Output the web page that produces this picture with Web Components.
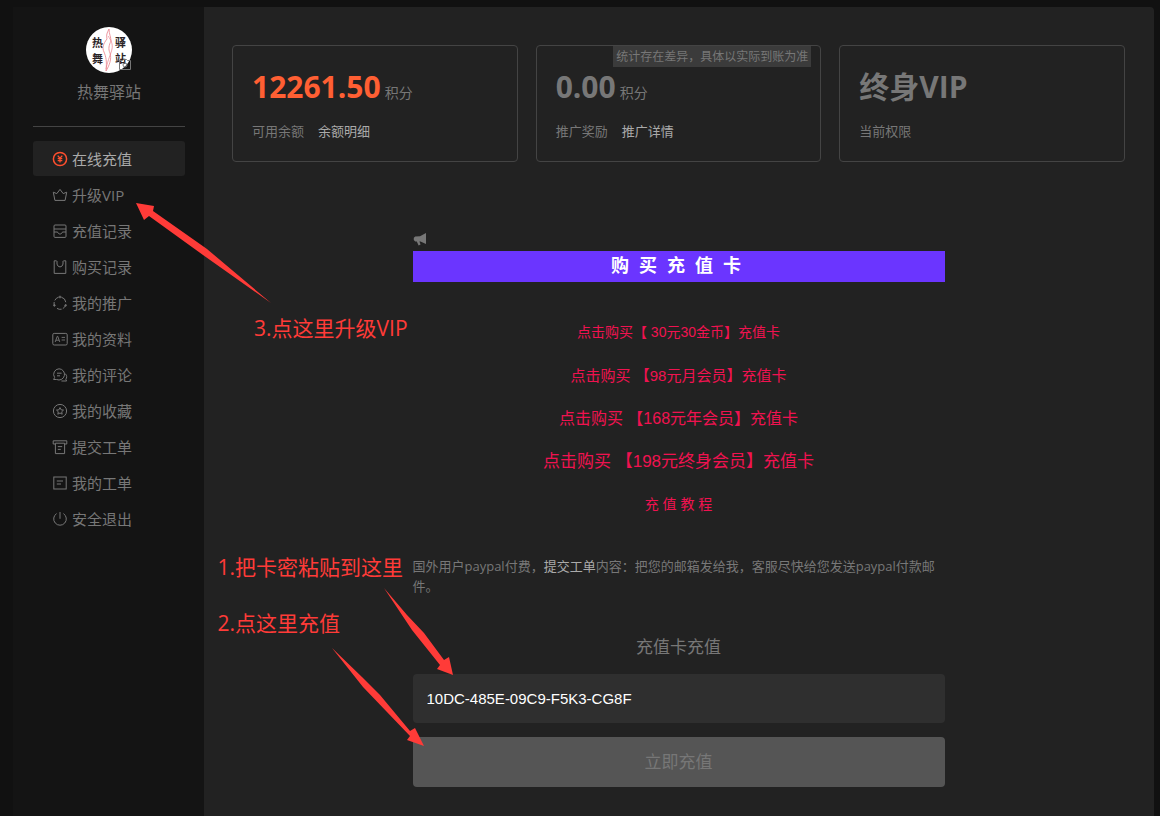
<!DOCTYPE html>
<html lang="zh-CN">
<head>
<meta charset="utf-8">
<title>在线充值</title>
<style>
  html { background: #111; }
  body {
    margin: 0;
    background: #111;
    color: #777;
    font-family: "Open Sans", "Noto Sans CJK SC", sans-serif;
    font-size: 13px;
  }
</style>
</head>
<body>
<member-page></member-page>

<script>
const define = (name, html) => {
  const template = document.createElement('template');
  template.innerHTML = html;
  customElements.define(name, class extends HTMLElement {
    constructor() {
      super();
      this.attachShadow({ mode: 'open' }).append(template.content.cloneNode(true));
    }
  });
};

const ICONS = {
  coin: '<circle cx="8" cy="8" r="6.6" stroke-width="1.5"/><path d="M5.7 4.6 8 7.2l2.3-2.6M8 7.2v4.4M5.7 7.6h4.6M5.7 9.6h4.6" stroke-width="1.3"/>',
  crown: '<path d="M1.3 5.2 4.8 6.6 8 2.4l3.2 4.2 3.5-1.4-1.6 8.2H2.9z"/>',
  drawer: '<rect x="2" y="2" width="12" height="12.4" rx="1"/><path d="M2 6h12M2 9h3.6c.4 1.4 1.2 2 2.4 2s2-.6 2.4-2H14"/>',
  bag: '<path d="M4.600 1.800H2.200v12.600h11.600V1.800h-2.400M5 4.400c.2 4.600 5.800 4.600 6 0M5 2v2.600M11 2v2.600"/>',
  share: '<path d="M9.4 2.2a6 6 0 0 1 4.400 5M13.800 9.600a6 6 0 0 1-3 4M9.600 14.200a6 6 0 0 1-4.600-.8M2.600 11a6 6 0 0 1-.4-4M2.800 5.400A6 6 0 0 1 6.600 2.200"/><circle cx="8" cy="2" r=".9"/><circle cx="2.4" cy="10.4" r=".8"/><circle cx="13.6" cy="10.4" r=".8"/>',
  card: '<rect x=".8" y="2.4" width="14.4" height="11.6" rx="1.4"/><path d="m3.2 11 2-5.6h.6l2 5.6M4 9.2h3M9.6 6.4h3.4M9.6 9h3.4" stroke-width=".9"/>',
  comment: '<path d="M7 1.8a5.6 5.6 0 1 1-2.4 10.7H1.6l1-2A5.6 5.6 0 0 1 7 1.8zM5 6.2h4.6M5 8.8h3M13.2 6.6c2 2 1.8 4.2.6 5.6l.8 1.8H9.4"/>',
  star: '<circle cx="8" cy="8" r="6.6"/><path d="m8 4.6 1.1 2.2 2.4.3-1.8 1.7.5 2.4L8 10l-2.2 1.2.5-2.4-1.8-1.7 2.4-.3z"/>',
  ticket: '<path d="M3.4 5H1.2V1.8h13.6V5h-2.2M3.4 4.2h9.2v10.4H3.4zM5.8 7.6h4.4M5.8 10.4h3"/>',
  note: '<rect x="1.8" y="2" width="12.4" height="12"/><path d="M4.8 6h6.2M4.8 9h4.2"/>',
  power: '<path d="M8 1v6.8M4.6 2.6a6.3 6.3 0 1 0 6.8 0"/>'
};

/* Sidebar entry: icon attribute picks the glyph, the slot holds the label */
customElements.define('nav-item', class extends HTMLElement {
  connectedCallback() {
    const root = this.attachShadow({ mode: 'open' });
    root.innerHTML = `
      <style>
        :host { display: block; }
        a {
          display: flex; align-items: center; gap: 4px;
          height: 35px; padding-left: 19px;
          color: inherit; font-size: 15px; text-decoration: none;
        }
        svg { width: 16px; height: 16px; fill: none; stroke: currentColor; stroke-width: 1; }
        :host([active]) a { background: #222; color: #aaa; border-radius: 3px; }
        :host([active]) svg { color: #ff4f2e; }
      </style>
      <a href="#"><svg viewBox="0 0 16 16" aria-hidden="true">${ICONS[this.getAttribute('icon')]}</svg><slot></slot></a>`;
  }
});

define('site-avatar', `
  <style>
    :host { display: block; position: relative; width: 46px; height: 46px; }
    svg { display: block; }
    .logo { width: 46px; height: 46px; }
    .edit { position: absolute; left: 32px; top: 31px; width: 14px; height: 14px; fill: none; stroke: #777; }
    text { font: 700 11px "Noto Sans CJK SC", sans-serif; fill: #2b2326; }
  </style>
  <svg class="logo" viewBox="0 0 46 46">
    <circle cx="23" cy="23" r="23" fill="#fff"/>
    <path d="M23 2c-2 4-3 6-2 10-4 5-5 9-3 13 2 5 3 9 2 19 3-5 6-12 4-18-2-4-1-8 1-12 0-4-2-7-2-12z" fill="#fff" stroke="#e9808a" stroke-width=".8"/>
    <path d="M22 9c3 4 5 8 4 13-1 5-4 10-6 20" fill="none" stroke="#e9808a" stroke-width=".7"/>
    <text x="6" y="20">热</text><text x="6" y="36">舞</text>
    <text x="29" y="20">驿</text><text x="29" y="36">站</text>
  </svg>
  <svg class="edit" viewBox="0 0 14 14" aria-hidden="true">
    <path d="M1.5 2.5h3l1-1h3l1 1h3v9h-11z"/><circle cx="7" cy="7" r="2"/>
  </svg>`);

/* Hand-drawn hint; its arrow comes in through the slot named "arrow" */
define('step-note', `
  <style>
    :host { position: absolute; color: #ff3b38; font-size: 21px; line-height: 30px; white-space: nowrap; pointer-events: none; z-index: 2; }
    ::slotted(svg) { position: absolute; fill: #ff3b38; overflow: visible; }
  </style>
  <slot></slot><slot name="arrow"></slot>`);

define('side-bar', `
  <style>
    :host { display: block; position: relative; background: #141414; padding: 20px 19px 20px 20px; }
    header { display: flex; flex-direction: column; align-items: center; gap: 7px; height: 99px; border-bottom: 1px solid #444; }
    .name { font-size: 16px; line-height: 24px; }
    nav { display: flex; flex-direction: column; gap: 1px; padding-top: 14px; }
    step-note { left: 241px; top: 306px; }
    step-note svg { left: -120px; top: -112px; width: 140px; height: 104px; }
  </style>
  <header>
    <site-avatar></site-avatar>
    <div class="name">热舞驿站</div>
  </header>
  <nav>
    <nav-item icon="coin" active>在线充值</nav-item>
    <nav-item icon="crown">升级VIP</nav-item>
    <nav-item icon="drawer">充值记录</nav-item>
    <nav-item icon="bag">购买记录</nav-item>
    <nav-item icon="share">我的推广</nav-item>
    <nav-item icon="card">我的资料</nav-item>
    <nav-item icon="comment">我的评论</nav-item>
    <nav-item icon="star">我的收藏</nav-item>
    <nav-item icon="ticket">提交工单</nav-item>
    <nav-item icon="note">我的工单</nav-item>
    <nav-item icon="power">安全退出</nav-item>
  </nav>
  <step-note>3.点这里升级VIP<svg slot="arrow" viewBox="0 0 140 104" aria-hidden="true"><path d="M2 2 20 5l-1 5 54 38 64 54-68-48-54-39-5 4z"/></svg></step-note>`);

define('stat-card', `
  <style>
    :host { display: block; position: relative; border: 1px solid #444; border-radius: 4px; padding: 20px 19px; }
    .value { display: flex; align-items: baseline; gap: 4px; height: 42px; font-size: 30px; font-weight: 700; line-height: 42px; }
    .value ::slotted([slot="unit"]) { font-size: 14px; font-weight: 400; color: #777; }
    :host([accent]) .value { color: #ff5f33; }
    .foot { display: flex; gap: 14px; margin-top: 13px; line-height: 20px; }
    .foot ::slotted(a) { color: #aaa; text-decoration: none; }
    .tip ::slotted(*) {
      position: absolute; top: 0; right: 9px; padding: 0 3px;
      background: #3b3b3b; font-size: 12px; line-height: 21px;
    }
  </style>
  <div class="value"><slot></slot><slot name="unit"></slot></div>
  <div class="foot"><slot name="label"></slot><slot name="link"></slot></div>
  <div class="tip"><slot name="tip"></slot></div>`);

define('recharge-panel', `
  <style>
    :host { display: block; position: relative; width: 100%; max-width: 532px; margin: 70px auto 0; }
    .horn { display: block; width: 14px; height: 14px; margin-bottom: 5px; fill: #777; }
    h2 {
      margin: 0; background: #6b35ff; color: #fff; text-align: center; white-space: pre;
      font: 700 18px/31px "Liberation Sans", "Noto Sans CJK SC", sans-serif;
    }
    ul { list-style: none; margin: 29px 0 30px; padding: 0; text-align: center; font-family: "Liberation Sans", "Noto Sans CJK SC", sans-serif; }
    li { height: 43px; line-height: 43px; font-size: 14px; }
    li a { color: #f01250; text-decoration: none; }
    li.month { font-size: 15px; }
    li.year { font-size: 16px; }
    li.life { font-size: 17px; }
    p { margin: 0; line-height: 20px; }
    p a { color: #aaa; text-decoration: none; }
    label { display: block; margin: 38px 0 14px; text-align: center; font-size: 17px; line-height: 26px; }
    input, button { display: block; box-sizing: border-box; width: 100%; border: 0; border-radius: 4px; }
    input {
      height: 49px; padding: 0 14px; background: #2f2f2f; color: #fff; outline: 0;
      font: 15px "Liberation Sans", "Noto Sans CJK SC", sans-serif;
    }
    button { height: 50px; margin-top: 14px; padding: 0 0 3px; background: #555; color: #777; font: inherit; font-size: 17px; }
    .card-note { left: -195px; bottom: 205px; }
    .card-note svg { left: 165px; top: 35px; width: 76px; height: 90px; }
    .pay-note { left: -195px; bottom: 149px; }
    .pay-note svg { left: 113px; top: 37px; width: 94px; height: 104px; }
  </style>
  <svg class="horn" viewBox="0 0 14 14" aria-hidden="true"><path d="M13 1v11L7.5 9.6 6.4 9.4l1.2 3.2-2 .8L3.800 9.400H2.200L.8 8V5.800L2.200 4.600 7 4.200z"/></svg>
  <h2>购  买  充  值  卡 </h2>
  <ul>
    <li><a href="#">点击购买【 30元30金币】充值卡</a></li>
    <li class="month"><a href="#">点击购买 【98元月会员】充值卡</a></li>
    <li class="year"><a href="#">点击购买 【168元年会员】充值卡</a></li>
    <li class="life"><a href="#">点击购买 【198元终身会员】充值卡</a></li>
    <li><a href="#">充 值 教 程</a></li>
  </ul>
  <p>国外用户paypal付费，<a href="#">提交工单</a>内容：把您的邮箱发给我，客服尽快给您发送paypal付款邮件。</p>
  <form>
    <label for="card">充值卡充值</label>
    <input id="card" type="text" value="10DC-485E-09C9-F5K3-CG8F">
    <button type="button">立即充值</button>
  </form>
  <step-note class="card-note">1.把卡密粘贴到这里<svg slot="arrow" viewBox="0 0 76 90" aria-hidden="true"><path d="M1 1 24 28 41 46 61 73 66 70 70 88 54 82 57 78 29 43z"/></svg></step-note>
  <step-note class="pay-note">2.点这里充值<svg slot="arrow" viewBox="0 0 94 104" aria-hidden="true"><path d="M1 3 31 32 49 50 79 86 84 83 93 101 76 95 79 91 32 42z"/></svg></step-note>`);

define('member-page', `
  <style>
    :host {
      display: grid; grid-template-columns: 191px 1fr;
      box-sizing: border-box; min-height: 100vh; padding: 7px 6px 0 13px;
    }
    main { background: #222; border-radius: 0 4px 0 0; padding: 38px 29px 29px 28px; }
    .stats { display: grid; grid-template-columns: repeat(3, 1fr); gap: 18px; }
  </style>
  <side-bar></side-bar>
  <main>
    <section class="stats">
      <stat-card accent>12261.50<span slot="unit">积分</span><span slot="label">可用余额</span><a slot="link" href="#">余额明细</a></stat-card>
      <stat-card>0.00<span slot="unit">积分</span><span slot="label">推广奖励</span><a slot="link" href="#">推广详情</a><span slot="tip">统计存在差异，具体以实际到账为准</span></stat-card>
      <stat-card>终身VIP<span slot="label">当前权限</span></stat-card>
    </section>
    <recharge-panel></recharge-panel>
  </main>`);
</script>
</body>
</html>
